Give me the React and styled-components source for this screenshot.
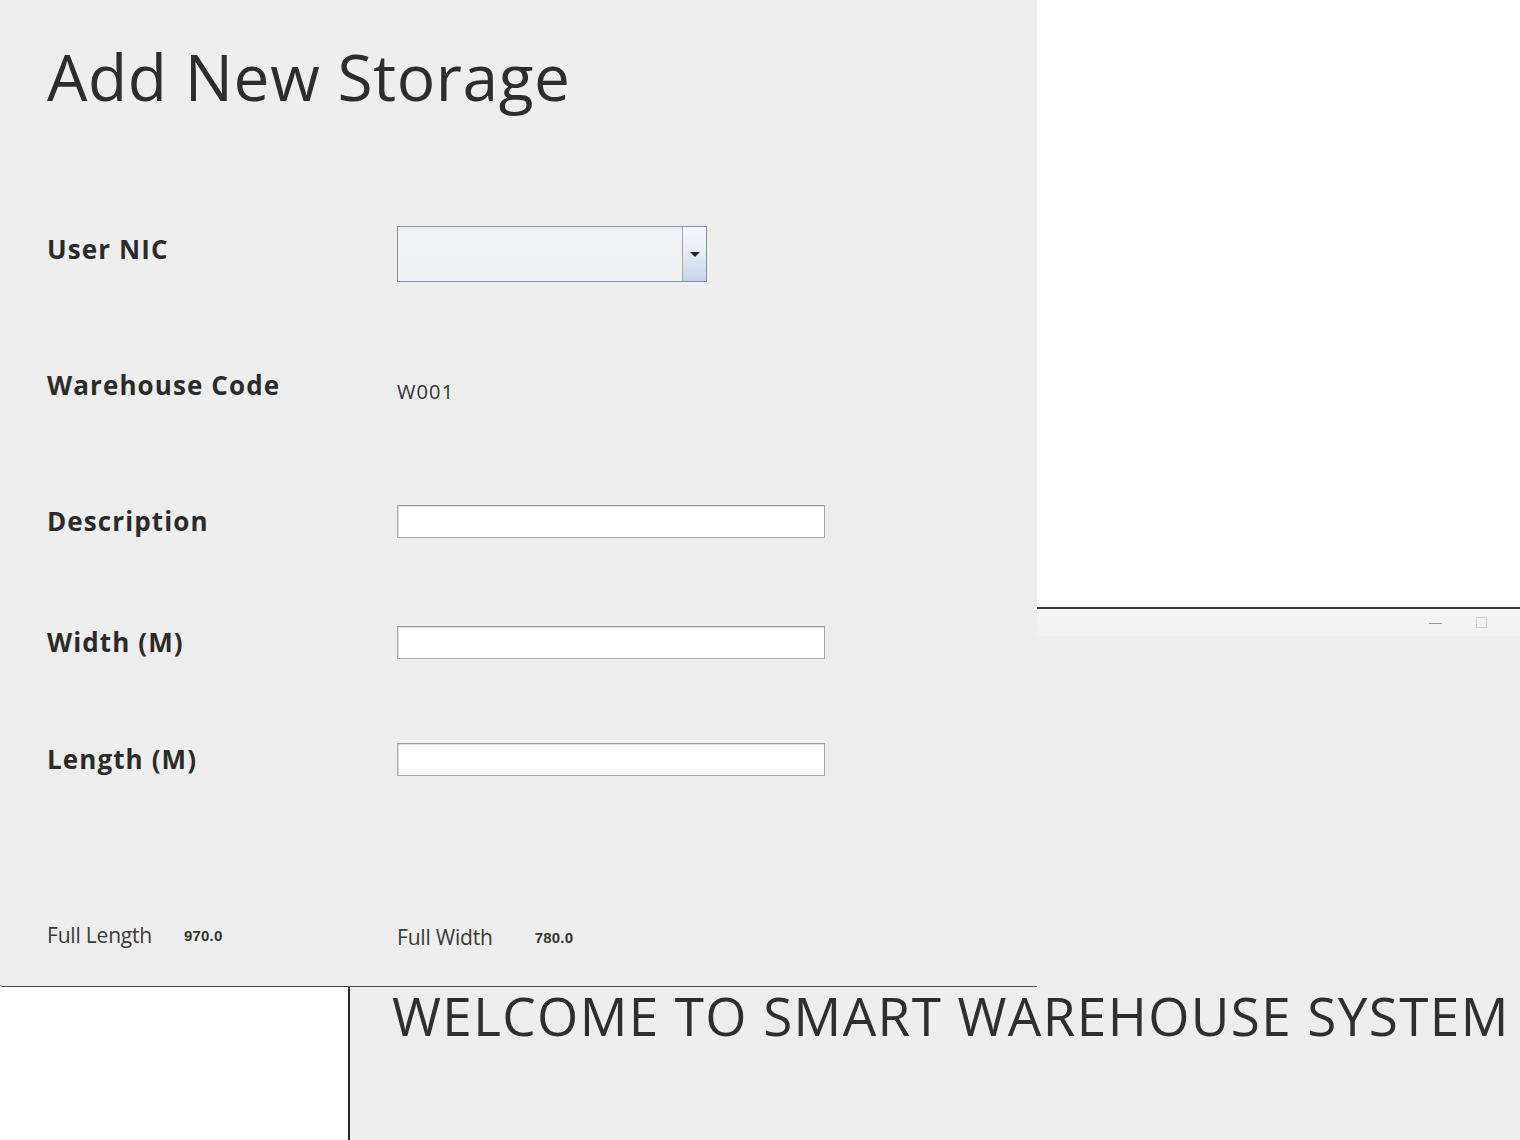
import React from "react";
import styled, { createGlobalStyle } from "styled-components";

const Global = createGlobalStyle`
  html, body { margin: 0; padding: 0; background: #eeeeee; }
  body { font-family: "Open Sans", "Noto Sans", sans-serif; color: #333; }
  #root { width: 1520px; height: 1140px; overflow: hidden; }
`;

const Screen = styled.div`
  width: 1520px;
  height: 1140px;
  display: grid;
  grid-template-columns: 1037px 1fr;
  grid-template-rows: 987px 1fr;
  background: #eeeeee;
`;

const FormPanel = styled.div`
  grid-column: 1;
  grid-row: 1;
  background: #eeeeee;
  border-bottom: 1px solid #4a4a4a;
  border-bottom-left-radius: 3px;
  box-sizing: border-box;
  padding-left: 47px;
  display: flex;
  flex-direction: column;
`;

const Title = styled.h1`
  margin: 0;
  height: 226px;
  flex-shrink: 0;
  padding-top: 38px;
  box-sizing: border-box;
  font-family: "Open Sans", "Noto Sans", sans-serif;
  font-weight: 400;
  font-size: 64px;
  line-height: 78px;
  letter-spacing: 0.6px;
  color: #2d2d2d;
`;

const Row = styled.div`
  display: grid;
  grid-template-columns: 350px 1fr;
  grid-template-rows: ${(p) => p.$h}px;
  align-items: center;
  flex-shrink: 0;
  height: ${(p) => p.$h}px;
  margin-top: ${(p) => p.$gap || 0}px;
`;

const Label = styled.div`
  font-family: "Open Sans", "Noto Sans", sans-serif;
  font-weight: 700;
  font-size: 26px;
  line-height: 30px;
  color: #2b2b2b;
  transform: translateY(${(p) => p.$dy || 0}px);
  letter-spacing: 1.1px;
`;

const Value = styled.div`
  font-family: "Open Sans", "Noto Sans", sans-serif;
  font-size: 20px;
  line-height: 26px;
  letter-spacing: 1.1px;
  color: #333;
  transform: translateY(${(p) => p.$dy || 0}px);
`;

const Combo = styled.div`
  width: 310px;
  height: 56px;
  box-sizing: border-box;
  border: 1px solid #8593a6;
  background: linear-gradient(#e6ecf4 0px, #eff1f4 6px, #eef0f2 100%);
  display: flex;
  justify-content: flex-end;
`;

const ComboButton = styled.div`
  width: 23px;
  height: 100%;
  border-left: 1px solid #9aa8b8;
  background: linear-gradient(#f4f7fb 0%, #e7eef6 45%, #c3d5e8 100%);
  display: flex;
  align-items: center;
  justify-content: center;
`;

const Arrow = styled.div`
  width: 0;
  height: 0;
  border-left: 5px solid transparent;
  border-right: 5px solid transparent;
  border-top: 5px solid #1f1f1f;
`;

const Field = styled.div`
  width: 428px;
  height: 33px;
  box-sizing: border-box;
  background: #ffffff;
  border: 1px solid #a9a9a9;
  border-top-color: #9c9c9c;
  box-shadow: inset 1px 1px 0 #e2e2e2;
`;

const Footer = styled.div`
  display: grid;
  grid-template-columns: 350px 1fr;
  grid-template-rows: 30px;
  flex-shrink: 0;
  height: 30px;
  margin-top: 145px;
  align-items: center;
`;

const Stat = styled.div`
  display: flex;
  align-items: center;
  gap: ${(p) => p.$gap}px;
  transform: translateY(${(p) => p.$dy || 0}px);
`;

const StatLabel = styled.span`
  font-family: "Open Sans", "Noto Sans", sans-serif;
  font-size: 21px;
  color: #3a3a3a;
  letter-spacing: -0.2px;
`;

const StatValue = styled.span`
  font-family: "Liberation Sans", Arial, sans-serif;
  font-weight: 700;
  font-size: 15px;
  color: #333;
  letter-spacing: 0.2px;
`;

const RightColumn = styled.div`
  grid-column: 2;
  grid-row: 1;
  display: flex;
  flex-direction: column;
`;

const WhiteWindow = styled.div`
  height: 607px;
  background: #ffffff;
  border-bottom: 2px solid #3a3a3a;
`;

const TitleStrip = styled.div`
  height: 27px;
  background: linear-gradient(#f4f4f4, #f1f1f1);
  display: flex;
  align-items: center;
  justify-content: flex-end;
  padding-right: 33px;
  gap: 34px;
`;

const MinIcon = styled.div`
  width: 13px;
  height: 1px;
  background: #9a9a9a;
  margin-top: 2px;
`;

const MaxIcon = styled.div`
  width: 9px;
  height: 9px;
  border: 1px solid #d2d2d2;
`;

const BottomRow = styled.div`
  grid-column: 1 / 3;
  grid-row: 2;
  display: grid;
  grid-template-columns: 350px 1fr;
`;

const WhiteBlock = styled.div`
  background: #ffffff;
  border-right: 2px solid #242424;
`;

const WelcomeArea = styled.div`
  background: #eeeeee;
  padding-left: 42px;
`;

const Welcome = styled.div`
  font-family: "Open Sans", "Noto Sans", sans-serif;
  font-weight: 400;
  font-size: 53px;
  line-height: 58px;
  letter-spacing: 1.4px;
  color: #2f2f2f;
  white-space: nowrap;
`;

export default function App() {
  return (
    <>
      <Global />
      <Screen>
        <FormPanel>
          <Title>Add New Storage</Title>
          <Row $h={56}>
            <Label $dy={-5}>User NIC</Label>
            <Combo>
              <ComboButton>
                <Arrow />
              </ComboButton>
            </Combo>
          </Row>
          <Row $h={40} $gap={87}>
            <Label $dy={-4}>Warehouse Code</Label>
            <Value $dy={3}>W001</Value>
          </Row>
          <Row $h={33} $gap={96}>
            <Label $dy={-1}>Description</Label>
            <Field />
          </Row>
          <Row $h={33} $gap={88}>
            <Label $dy={-1}>Width (M)</Label>
            <Field />
          </Row>
          <Row $h={33} $gap={84}>
            <Label $dy={-1}>Length (M)</Label>
            <Field />
          </Row>
          <Footer>
            <Stat $gap={32} $dy={-1}>
              <StatLabel>Full Length</StatLabel>
              <StatValue>970.0</StatValue>
            </Stat>
            <Stat $gap={42} $dy={1}>
              <StatLabel>Full Width</StatLabel>
              <StatValue>780.0</StatValue>
            </Stat>
          </Footer>
        </FormPanel>
        <RightColumn>
          <WhiteWindow />
          <TitleStrip>
            <MinIcon />
            <MaxIcon />
          </TitleStrip>
        </RightColumn>
        <BottomRow>
          <WhiteBlock />
          <WelcomeArea>
            <Welcome>WELCOME TO SMART WAREHOUSE SYSTEM</Welcome>
          </WelcomeArea>
        </BottomRow>
      </Screen>
    </>
  );
}
